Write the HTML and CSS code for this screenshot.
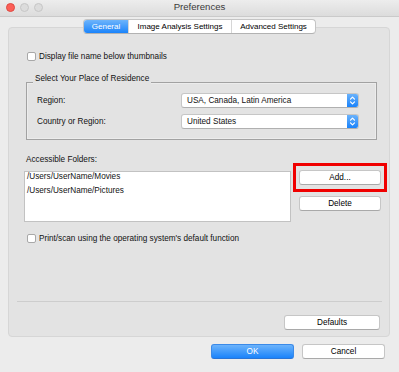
FILE: index.html
```html
<!DOCTYPE html>
<html>
<head>
<meta charset="utf-8">
<link rel="stylesheet" href="styles.css">
</head>
<body>
<div class="window">
  <div class="titlebar">
    <div class="lights"><span class="light red"></span><span class="light"></span><span class="light"></span></div>
    <div class="title">Preferences</div>
    <div></div>
  </div>
  <div class="tabs">
    <div class="seg">
      <span class="tab t1 active">General</span>
      <span class="tab t2">Image Analysis Settings</span>
      <span class="tab t3">Advanced Settings</span>
    </div>
  </div>
  <div class="panel">
    <div class="check first"><span class="box"></span><span>Display file name below thumbnails</span></div>
    <div class="group">
      <div class="legend">Select Your Place of Residence</div>
      <div class="field first-field">
        <span class="flabel">Region:</span>
        <div class="select"><span class="stext">USA, Canada, Latin America</span><span class="stepper"><svg width="11" height="13" viewBox="0 0 11 13"><path d="M3.5 5.2 L5.5 3.2 L7.5 5.2 M3.5 7.8 L5.5 9.8 L7.5 7.8" fill="none" stroke="#fff" stroke-width="1.2" stroke-linecap="round" stroke-linejoin="round"/></svg></span></div>
      </div>
      <div class="field">
        <span class="flabel">Country or Region:</span>
        <div class="select"><span class="stext">United States</span><span class="stepper"><svg width="11" height="13" viewBox="0 0 11 13"><path d="M3.5 5.2 L5.5 3.2 L7.5 5.2 M3.5 7.8 L5.5 9.8 L7.5 7.8" fill="none" stroke="#fff" stroke-width="1.2" stroke-linecap="round" stroke-linejoin="round"/></svg></span></div>
      </div>
    </div>
    <div class="folders">
      <div class="fleft">
        <div class="flabel2">Accessible Folders:</div>
        <div class="list">
          <div class="item">/Users/UserName/Movies</div>
          <div class="item">/Users/UserName/Pictures</div>
        </div>
      </div>
      <div class="fright">
        <div class="highlight"><button class="btn side">Add...</button></div>
        <button class="btn side delete">Delete</button>
      </div>
    </div>
    <div class="check second"><span class="box"></span><span>Print/scan using the operating system's default function</span></div>
    <div class="sep"></div>
    <div class="defaults-row"><button class="btn defaults">Defaults</button></div>
  </div>
  <div class="footer">
    <button class="btn wide primary">OK</button>
    <button class="btn wide">Cancel</button>
  </div>
</div>
</body>
</html>
```

FILE: styles.css
```css
* { box-sizing: border-box; }
html, body { margin: 0; padding: 0; }
body {
  width: 399px;
  height: 372px;
  overflow: hidden;
  font-family: "Liberation Sans", Arial, sans-serif;
  font-size: 8.2px;
  color: #111;
}
.window {
  width: 399px;
  height: 372px;
  background: #ececec;
  display: flex;
  flex-direction: column;
}
.titlebar {
  height: 17px;
  display: grid;
  grid-template-columns: 1fr auto 1fr;
  background: linear-gradient(#ededed, #dcdcdc);
  border-bottom: 1px solid #cacaca;
}
.lights {
  display: flex;
  gap: 5px;
  padding: 3px 0 0 6px;
}
.light {
  width: 9px;
  height: 9px;
  border-radius: 50%;
  background: #dcdcdc;
  border: 1px solid #c6c6c6;
}
.light.red {
  background: #fc5f57;
  border-color: #de4a42;
}
.title {
  font-size: 9.6px;
  line-height: 14px;
  color: #3a3a3a;
}
.tabs {
  display: flex;
  justify-content: center;
  margin-top: 2px;
  margin-bottom: -7px;
  position: relative;
  z-index: 1;
}
.seg {
  display: flex;
  height: 15px;
  border: 1px solid #c4c4c4;
  border-bottom-color: #b2b2b2;
  border-radius: 4px;
  background: #fff;
  overflow: hidden;
}
.tab {
  display: flex;
  align-items: center;
  justify-content: center;
  font-size: 8px;
  color: #000;
  border-left: 1px solid #d6d6d6;
}
.t1 { width: 44px; border-left: none; }
.t2 { width: 103px; }
.t3 { width: 84px; }
.tab.active {
  background: linear-gradient(#6db4fb, #1b84fb);
  color: #fff;
}
.panel {
  margin: 0 9px 0 8px;
  height: 310px;
  border: 1px solid #d6d6d6;
  border-radius: 4px;
  background: #e3e3e3;
  display: flex;
  flex-direction: column;
}
.check {
  display: flex;
  align-items: center;
  height: 13px;
  margin-left: 18px;
}
.check.first { margin-top: 22px; }
.check.second { margin-top: 10px; }
.box {
  width: 9px;
  height: 9px;
  background: #fff;
  border: 1px solid #a8a8a8;
  border-radius: 2px;
  margin-right: 3px;
}
.group {
  margin: 19px 12px 0 17px;
  height: 58px;
  border: 1px solid #a2a2a2;
  box-shadow: inset 0 0 0 1px #ececec;
}
.legend {
  display: block;
  width: max-content;
  margin: -9px 0 0 6px;
  padding: 0 2px;
  line-height: 10px;
  background: #e3e3e3;
  position: relative;
  z-index: 1;
}
.field {
  display: flex;
  align-items: center;
  height: 15px;
  padding-left: 10px;
  margin-top: 6px;
}
.field.first-field { margin-top: 9px; }
.flabel { width: 144px; }
.select {
  width: 178px;
  height: 15px;
  display: flex;
  background: #fff;
  border: 1px solid #c6c6c6;
  border-bottom-color: #b0b0b0;
  border-radius: 3px;
  overflow: hidden;
}
.stext {
  flex: 1;
  padding-left: 5px;
  line-height: 13px;
}
.stepper {
  width: 11px;
  height: 13px;
  background: linear-gradient(#6ab2fb, #1a83fb);
  display: flex;
}
.folders {
  display: flex;
  align-items: flex-start;
  margin: 15px 0 0 15px;
}
.fleft { width: 267px; }
.flabel2 {
  line-height: 10px;
  padding-left: 2px;
  margin-bottom: 6px;
}
.list {
  height: 51px;
  background: #fff;
  border: 1px solid #c2c2c2;
  padding: 0 0 0 2px;
}
.item {
  line-height: 10px;
  margin-bottom: 4px;
}
.fright {
  margin: 8px 0 0 2px;
  display: flex;
  flex-direction: column;
}
.highlight {
  border: 3px solid #f00000;
  padding: 4px 3px;
}
.btn {
  display: flex;
  align-items: center;
  justify-content: center;
  height: 15px;
  padding: 0;
  margin: 0;
  font-family: "Liberation Sans", Arial, sans-serif;
  font-size: 8.2px;
  color: #000;
  background: #fff;
  border: 1px solid #c6c6c6;
  border-bottom-color: #a9a9a9;
  border-radius: 3px;
}
.side { width: 82px; }
.delete { margin: 4px 0 0 6px; }
.sep {
  height: 1px;
  background: #cdcdcd;
  margin: 56px 7px 0 8px;
}
.defaults-row {
  display: flex;
  justify-content: flex-end;
  padding-right: 9px;
  margin-top: 13px;
}
.defaults { width: 96px; }
.footer {
  display: flex;
  justify-content: flex-end;
  gap: 8px;
  padding-right: 14px;
  margin-top: 7px;
}
.wide { width: 83px; }
.primary {
  background: linear-gradient(#6cb3fb, #1a83fb);
  border-color: #3b8ae8;
  border-bottom-color: #2a74d6;
  color: #fff;
}
```
